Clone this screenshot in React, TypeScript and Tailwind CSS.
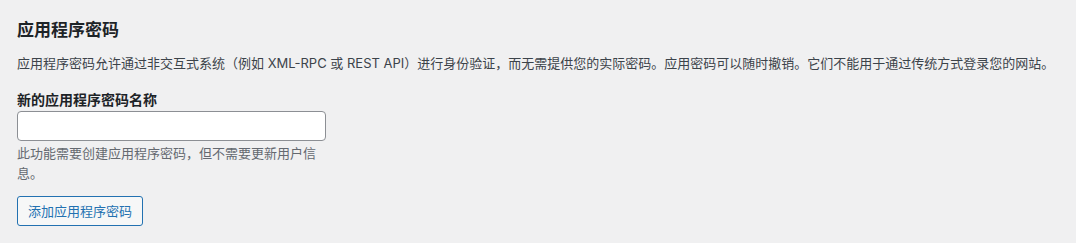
export default function App() {
  return (
    <div
      className="min-h-[243px] w-full bg-[#f0f0f1] px-[17px] pt-[17px] text-[#3c434a]"
      style={{ fontFamily: '-apple-system, Inter, "Noto Sans CJK SC", sans-serif' }}
    >
      <h2 className="text-[17px] font-semibold leading-[26px] text-[#1d2327]">应用程序密码</h2>
      <p className="mt-[10px] text-[13px] leading-[20px]">
        应用程序密码允许通过非交互式系统（例如 XML-RPC 或 REST API）进行身份验证，而无需提供您的实际密码。应用密码可以随时撤销。它们不能用于通过传统方式登录您的网站。
      </p>
      <div className="mt-[17px] flex flex-col">
        <label className="text-[14px] font-semibold leading-[20px] text-[#1d2327]">新的应用程序密码名称</label>
        <input
          type="text"
          className="mt-[1px] h-[30px] w-[309px] rounded-[4px] border border-[#8c8f94] bg-white px-2 text-[14px] outline-none"
        />
        <p className="mt-[2px] w-[310px] text-[13px] leading-[20px] text-[#646970]">
          此功能需要创建应用程序密码，但不需要更新用户信息。
        </p>
      </div>
      <button className="mt-[13px] h-[30px] rounded-[3px] border border-[#2271b1] bg-[#f6f7f7] px-[10px] text-[13px] leading-[28px] text-[#2271b1]">
        添加应用程序密码
      </button>
    </div>
  );
}
